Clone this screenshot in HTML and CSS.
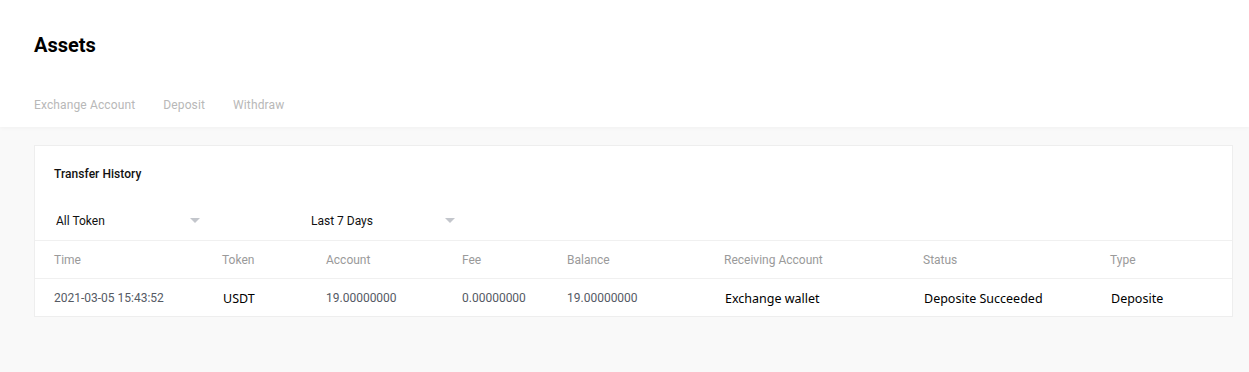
FILE: index.html
```html
<!DOCTYPE html>
<html lang="en">
<head>
    <meta charset="utf-8" />
    <title>Assets</title>
    <link rel="stylesheet" href="styles.css">
</head>
<body>
    <div class="header">
        <h1 class="title">Assets</h1>
        <div class="tabs">
            <span class="tab">Exchange Account</span>
            <span class="tab">Deposit</span>
            <span class="tab">Withdraw</span>
        </div>
    </div>

    <div class="main">
        <div class="card">
            <div class="card-title">Transfer History</div>

            <div class="filters">
                <div class="select">All Token <span class="arrow"></span></div>
                <div class="select">Last 7 Days <span class="arrow"></span></div>
            </div>

            <div class="row head">
                <div>Time</div>
                <div>Token</div>
                <div>Account</div>
                <div>Fee</div>
                <div>Balance</div>
                <div>Receiving Account</div>
                <div>Status</div>
                <div>Type</div>
            </div>
            <div class="row">
                <div class="num">2021-03-05 15:43:52</div>
                <div class="txt">USDT</div>
                <div class="num">19.00000000</div>
                <div class="num">0.00000000</div>
                <div class="num">19.00000000</div>
                <div class="txt">Exchange wallet</div>
                <div class="txt">Deposite Succeeded</div>
                <div class="txt">Deposite</div>
            </div>
        </div>
    </div>
</body>
</html>
```

FILE: styles.css
```css
body {
    margin: 0;
    font-family: Roboto, Arial, sans-serif;
    background: #f9f9f9;
    height: 100vh;
}

.header {
    background: #fff;
    padding: 33px 34px 0;
    height: 94px;
    box-shadow: 0 1px 4px rgba(0, 0, 0, 0.04);
}

.title {
    margin: 0;
    font-size: 20px;
    line-height: 24px;
    font-weight: 700;
    color: #000;
}

.tabs {
    display: flex;
    gap: 28px;
    margin-top: 27px;
    line-height: 43px;
    font-size: 12px;
    letter-spacing: 0.13px;
    color: #b8b8b8;
}

.main {
    padding: 18px 16px 0 34px;
}

.card {
    background: #fff;
    border: 1px solid #eeeeee;
}

.card-title {
    padding: 2px 0 0 19px;
    line-height: 52px;
    font-size: 12px;
    font-weight: 500;
    letter-spacing: 0.05px;
    color: #111;
}

.filters {
    display: flex;
    gap: 111px;
    height: 40px;
    align-items: center;
    padding-left: 21px;
    border-bottom: 1px solid #f0f0f0;
}

.select {
    width: 144px;
    display: flex;
    justify-content: space-between;
    align-items: center;
    padding-top: 2px;
    font-size: 12px;
    color: #111;
}

.arrow {
    width: 0;
    height: 0;
    margin-top: -2px;
    border-left: 5px solid transparent;
    border-right: 5px solid transparent;
    border-top: 5px solid #c3c6cc;
}

.row {
    display: grid;
    grid-template-columns: 168px 104px 136px 105px 157px 199px 187px 1fr;
    align-items: center;
    height: 37px;
    padding-left: 19px;
    font-size: 12px;
}

.row.head {
    color: #9a9a9a;
    border-bottom: 1px solid #f0f0f0;
}

.num {
    color: #555a64;
}

.txt {
    font-family: "Noto Sans", sans-serif;
    font-size: 12.5px;
    color: #000;
    padding: 1px 0 0 1px;
}
```
